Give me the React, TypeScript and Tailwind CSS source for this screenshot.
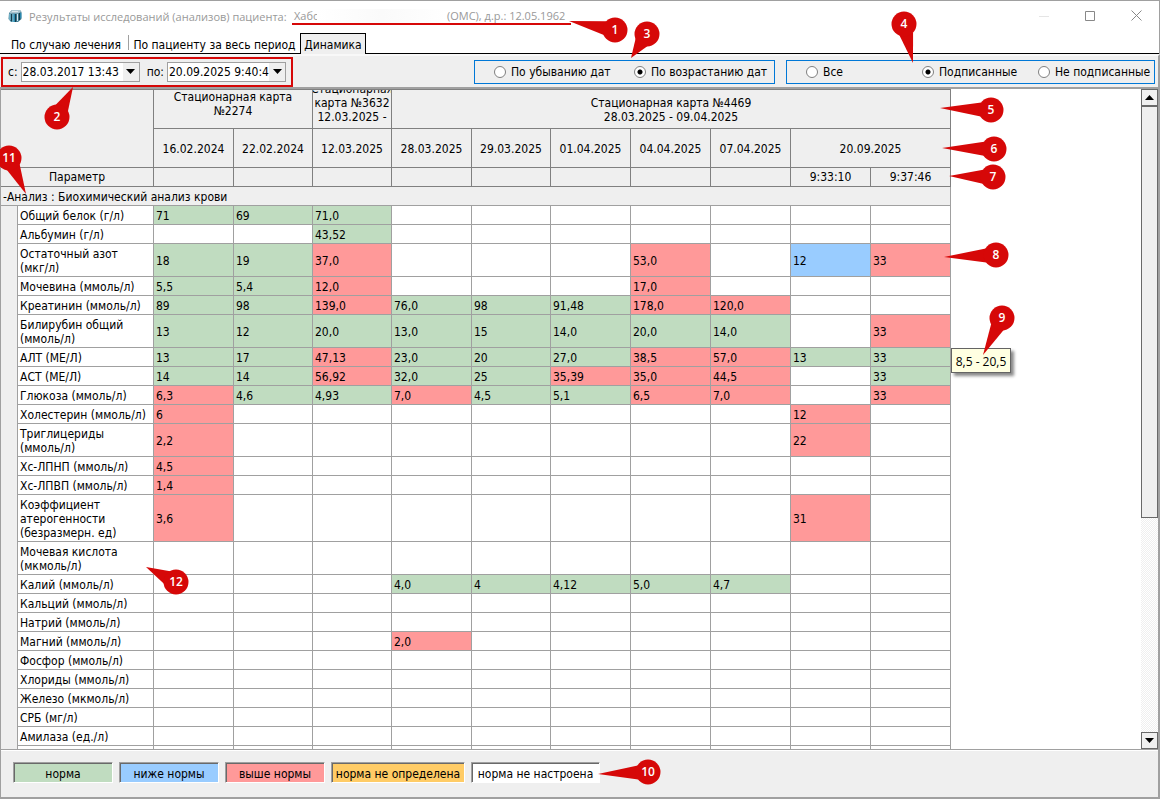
import React, { useState } from 'react';

type Level = 'n' | 'l' | 'h';
type Cell = [string, Level] | null;

const fill: Record<Level, string> = {
  n: 'bg-[#c0dcc0]',
  l: 'bg-[#99ccff]',
  h: 'bg-[#ff9999]',
};

// Each row lists its values as "column:value:level".
const source: [string[], string][] = [
  [['Общий белок (г/л)'], '0:71:n 1:69:n 2:71,0:n'],
  [['Альбумин (г/л)'], '2:43,52:n'],
  [['Остаточный азот', '(мкг/л)'], '0:18:n 1:19:n 2:37,0:h 6:53,0:h 8:12:l 9:33:h'],
  [['Мочевина (ммоль/л)'], '0:5,5:n 1:5,4:n 2:12,0:h 6:17,0:h'],
  [['Креатинин (ммоль/л)'], '0:89:n 1:98:n 2:139,0:h 3:76,0:n 4:98:n 5:91,48:n 6:178,0:h 7:120,0:h'],
  [['Билирубин общий', '(ммоль/л)'], '0:13:n 1:12:n 2:20,0:n 3:13,0:n 4:15:n 5:14,0:n 6:20,0:n 7:14,0:n 9:33:h'],
  [['АЛТ (МЕ/Л)'], '0:13:n 1:17:n 2:47,13:h 3:23,0:n 4:20:n 5:27,0:n 6:38,5:h 7:57,0:h 8:13:n 9:33:n'],
  [['АСТ (МЕ/Л)'], '0:14:n 1:14:n 2:56,92:h 3:32,0:n 4:25:n 5:35,39:h 6:35,0:h 7:44,5:h 9:33:n'],
  [['Глюкоза (ммоль/л)'], '0:6,3:h 1:4,6:n 2:4,93:n 3:7,0:h 4:4,5:n 5:5,1:n 6:6,5:h 7:7,0:h 9:33:h'],
  [['Холестерин (ммоль/л)'], '0:6:h 8:12:h'],
  [['Триглицериды', '(ммоль/л)'], '0:2,2:h 8:22:h'],
  [['Хс-ЛПНП (ммоль/л)'], '0:4,5:h'],
  [['Хс-ЛПВП (ммоль/л)'], '0:1,4:h'],
  [['Коэффициент', 'атерогенности', '(безразмерн. ед)'], '0:3,6:h 8:31:h'],
  [['Мочевая кислота', '(мкмоль/л)'], ''],
  [['Калий (ммоль/л)'], '3:4,0:n 4:4:n 5:4,12:n 6:5,0:n 7:4,7:n'],
  [['Кальций (ммоль/л)'], ''],
  [['Натрий (ммоль/л)'], ''],
  [['Магний (ммоль/л)'], '3:2,0:h'],
  [['Фосфор (ммоль/л)'], ''],
  [['Хлориды (ммоль/л)'], ''],
  [['Железо (мкмоль/л)'], ''],
  [['СРБ (мг/л)'], ''],
  [['Амилаза (ед./л)'], ''],
  [[], ''],
];

const rows = source.map(([name, values]) => {
  const cells: Cell[] = Array(10).fill(null);
  values.split(' ').filter(Boolean).forEach((item) => {
    const [col, value, level] = item.split(':');
    cells[Number(col)] = [value, level as Level];
  });
  return { name, cells };
});

const columns = ['w-20', 'w-[79px]', 'w-[79px]', 'w-20', 'w-[79px]', 'w-20', 'w-20', 'w-20', 'w-20', 'w-20'];
const dates = ['16.02.2024', '22.02.2024', '12.03.2025', '28.03.2025', '29.03.2025', '01.04.2025', '04.04.2025', '07.04.2025'];

const legend = [
  ['норма', 'w-[100px] bg-[#c0dcc0]'],
  ['ниже нормы', 'w-[100px] bg-[#99ccff]'],
  ['выше нормы', 'w-[100px] bg-[#ff9999]'],
  ['норма не определена', 'w-[134px] bg-[#ffcc66]'],
  ['норма не настроена', 'w-[129px] bg-white'],
];

// Callouts: label, centre of the disc, tip of the pointer.
const callouts = [
  [1, 615, 30, 569, 21],
  [2, 57, 117, 73, 87],
  [3, 647, 34, 631, 58],
  [4, 904, 24, 913, 63],
  [5, 991, 110, 940, 108],
  [6, 994, 149, 942, 148],
  [7, 993, 177, 949, 176],
  [8, 996, 255, 944, 257],
  [9, 1002, 318, 983, 355],
  [10, 648, 772, 598, 774],
  [11, 9, 158, 26, 194],
  [12, 176, 582, 146, 567],
];

function Callouts() {
  return (
    <svg className="pointer-events-none absolute left-0 top-0" width="1160" height="799" viewBox="0 0 1160 799">
      {callouts.map(([n, cx, cy, tx, ty]) => {
        const d = Math.hypot(tx - cx, ty - cy);
        const ux = (tx - cx) / d;
        const uy = (ty - cy) / d;
        const bx = cx + ux * 10;
        const by = cy + uy * 10;
        return (
          <g key={n} fill="#d60808">
            <polygon points={`${tx},${ty} ${bx - uy * 7},${by + ux * 7} ${bx + uy * 7},${by - ux * 7}`} />
            <circle cx={cx} cy={cy} r="12.5" />
            <text x={cx} y={cy + 4} fill="#fff" textAnchor="middle" className="font-['Open_Sans',sans-serif] text-[12px] font-semibold">
              {n}
            </text>
          </g>
        );
      })}
    </svg>
  );
}

function AppIcon() {
  return (
    <svg width="14" height="14" viewBox="0 0 14 14" aria-hidden="true">
      <path d="M1 4 4 1h8l1.500 2v7L10 13H3L.5 10z" fill="#3f7f96" />
      <path d="M1 4 4 1h8l1 2-3 1.500H2z" fill="#a9c4cf" />
      <path d="M2 5v6M5 5v8" stroke="#8fd0e6" strokeWidth="1.200" />
      <path d="M3.500 5v7M7.500 5v8M11.500 4v7" stroke="#173a4a" strokeWidth="1.200" />
      <path d="M9.500 5v7M4 2.500h6" stroke="#dbe7ec" />
      <path d="M6.200 5v8M12.800 4v5" stroke="#2591bd" />
    </svg>
  );
}

function DateBox({ id, label, value }: { id: string; label: string; value: string }) {
  return (
    <div className="flex items-center gap-[3px]">
      <label htmlFor={id}>{label}</label>
      <div className="flex h-5 w-[119px] border border-[#a0a0a0] bg-white">
        <input id={id} defaultValue={value} className="min-w-0 flex-1 bg-transparent pl-px outline-none" />
        <button aria-label="Открыть календарь" className="flex w-4 items-center justify-center bg-[#efefef]">
          <svg width="9" height="5" viewBox="0 0 9 5"><path d="M0 0h9L4.500 5z" /></svg>
        </button>
      </div>
    </div>
  );
}

function RadioBox({ name, options, initial, width, cols }: { name: string; options: string[]; initial: number; width: string; cols: string }) {
  const [value, setValue] = useState(initial);
  return (
    <div role="radiogroup" className={`grid h-6 items-center border border-[#0078d7] pl-[19px] ${width} ${cols}`}>
      {options.map((o, i) => (
        <label key={o} className="flex items-center gap-[5px] whitespace-nowrap">
          <input
            type="radio"
            name={name}
            checked={value === i}
            onChange={() => setValue(i)}
            className="size-3 shrink-0 appearance-none rounded-full border border-[#808080] bg-white checked:bg-[radial-gradient(circle,#000_0_2px,#fff_3px)]"
          />
          {o}
        </label>
      ))}
    </div>
  );
}

const head = 'border-r border-b border-[#808080] px-0 pb-0 font-normal';

function Grid() {
  return (
    <table className="w-[950px] shrink-0 table-fixed border-separate border-spacing-0 self-start">
      <colgroup>
        <col className="w-[17px]" />
        <col className="w-[136px]" />
        {columns.map((c, i) => <col key={i} className={c} />)}
      </colgroup>
      <thead className="bg-[#efefef]">
        <tr className="h-10">
          <th colSpan={2} rowSpan={2} className={`${head} border-t pt-0`} />
          <th colSpan={2} className={`${head} border-t pt-0`}>
            <div className="flex h-[38px] flex-col overflow-hidden"><span>Стационарная карта</span><span>№2274</span></div>
          </th>
          <th className={`${head} border-t pt-0`}>
            <div className="flex h-[38px] flex-col items-center justify-end overflow-hidden whitespace-nowrap pb-1">
              <span>Стационарная</span><span>карта №3632</span><span>12.03.2025 -</span>
            </div>
          </th>
          <th colSpan={7} className={`${head} border-t pt-0.5`}>
            <div>Стационарная карта №4469</div>
            <div>28.03.2025 - 09.04.2025</div>
          </th>
        </tr>
        <tr className="h-[39px]">
          {dates.map((d) => <th key={d} className={`${head} pt-0.5`}>{d}</th>)}
          <th colSpan={2} className={`${head} pt-0.5`}>20.09.2025</th>
        </tr>
        <tr className="h-[19px]">
          <th colSpan={2} className={`${head} pt-0`}>Параметр</th>
          {dates.map((d) => <th key={d} className={`${head} pt-0`} />)}
          <th className={`${head} pt-0`}>9:33:10</th>
          <th className={`${head} pt-0`}>9:37:46</th>
        </tr>
      </thead>
      <tbody>
        <tr className="h-[19px] bg-[#efefef]">
          <th colSpan={12} className="border-r border-b border-[#a0a0a0] px-0.5 pt-0.5 pb-0 text-left font-normal">
            -Анализ : Биохимический анализ крови
          </th>
        </tr>
        {rows.map((row, r) => (
          <tr key={r} className="h-[19px]">
            {r === 0 && <td rowSpan={rows.length} className="border-r border-[#a0a0a0] bg-[#efefef] p-0" />}
            <th className="whitespace-nowrap border-r border-b border-[#a0a0a0] px-0.5 pt-[3px] pb-px text-left font-normal">
              {row.name.map((line) => <div key={line}>{line}</div>)}
            </th>
            {row.cells.map((cell, c) => (
              <td key={c} className={`border-r border-b border-[#a0a0a0] px-0.5 pt-0.5 pb-0 ${cell ? fill[cell[1]] : 'bg-white'}`}>
                {cell?.[0]}
              </td>
            ))}
          </tr>
        ))}
      </tbody>
    </table>
  );
}

function ScrollBar() {
  const button = 'flex h-[17px] shrink-0 items-center justify-center border border-[#696969] bg-[#f0f0f0]';
  return (
    <div className="ml-auto flex w-[17px] flex-col bg-[repeating-conic-gradient(#efefef_0_25%,#fff_0_50%)] bg-[length:2px_2px]">
      <button aria-label="Прокрутить вверх" className={button}>
        <svg width="9" height="5" viewBox="0 0 9 5"><path d="M0 5h9L4.500 0z" /></svg>
      </button>
      <div className="h-[412px] border border-[#696969] bg-[#efefef]" />
      <button aria-label="Прокрутить вниз" className={`${button} mt-auto`}>
        <svg width="9" height="5" viewBox="0 0 9 5"><path d="M0 0h9L4.500 5z" /></svg>
      </button>
    </div>
  );
}

export default function App() {
  return (
    <div className="relative flex h-screen flex-col overflow-hidden border-t border-[#a0a0a0] bg-white font-['DejaVu_Sans_Condensed','DejaVu_Sans',sans-serif] text-[12px] leading-[14px] text-black">
      <header className="flex h-[29px] shrink-0 items-center border-r border-[#a0a0a0] pl-2 font-['Open_Sans',sans-serif] text-[#999]">
        <AppIcon />
        <h1 className="ml-[7px] flex items-center whitespace-nowrap text-[11px]">
          <span className="w-[263px] pt-0.5">Результаты исследований (анализов) пациента:</span>
          <span className="flex border-b-2 border-[#d60808] pt-0.5 pl-0.5">
            <span className="w-[23px]">Хабо</span>
            <span className="w-[130px] bg-linear-to-r from-white via-[#fafafa] to-white" />
            <span className="w-[124px]">(ОМС), д.р.: 12.05.1962</span>
          </span>
        </h1>
        <div className="ml-auto flex items-center gap-9 pr-[17px]">
          <button aria-label="Свернуть"><svg width="10" height="10"><path d="M0 5.500h10" stroke="#e5e5e5" /></svg></button>
          <button aria-label="Развернуть"><svg width="10" height="10"><path d="M.5.5h9v9h-9z" fill="none" stroke="#888" /></svg></button>
          <button aria-label="Закрыть"><svg width="11" height="11"><path d="m.5.5 10 10m0-10-10 10" stroke="#888" /></svg></button>
        </div>
      </header>

      <div role="tablist" className="flex h-6 shrink-0 items-end border-r border-[#a0a0a0] shadow-[inset_0_-1px_#000]">
        <button role="tab" className="h-5 w-32 pt-0.5 pl-1 whitespace-nowrap">По случаю лечения</button>
        <div className="mb-1 h-[15px] w-px bg-[#a0a0a0]" />
        <button role="tab" className="h-5 w-[171px] pt-0.5 whitespace-nowrap">По пациенту за весь период</button>
        <button role="tab" aria-selected="true" className="h-[21px] w-[66px] border border-b-0 border-black bg-[#efefef] pt-0.5">Динамика</button>
      </div>

      <div className="flex h-[33px] shrink-0 items-center border-t-2 border-r-2 border-[#f8f8f8] border-r-[#a0a0a0] bg-[#efefef] pr-[3px]">
        <div className="ml-px flex h-[30px] w-[292px] items-center justify-between border-2 border-[#d60808] pl-[5px] pr-[5px]">
          <DateBox id="from" label="с:" value="28.03.2017 13:43" />
          <DateBox id="to" label="по:" value="20.09.2025 9:40:45" />
        </div>
        <div className="ml-auto flex gap-[11px]">
          <RadioBox name="order" options={['По убыванию дат', 'По возрастанию дат']} initial={1} width="w-[301px]" cols="grid-cols-2" />
          <RadioBox name="signed" options={['Все', 'Подписанные', 'Не подписанные']} initial={1} width="w-[369px]" cols="grid-cols-3" />
        </div>
      </div>

      <main className="flex min-h-0 flex-1 overflow-hidden border-t-2 border-r-2 border-l border-[#a0a0a0]">
        <Grid />
        <ScrollBar />
      </main>

      <footer className="flex h-[50px] shrink-0 gap-1.5 border-t border-r-2 border-b-2 border-l border-[#a0a0a0] bg-[#efefef] pt-3 pl-3 shadow-[inset_0_1px_#fff]">
        {legend.map(([label, style]) => (
          <div
            key={label}
            className={`flex h-[21px] items-center justify-center whitespace-nowrap border border-t-[#a0a0a0] border-l-[#a0a0a0] border-r-white border-b-white pt-0.5 shadow-[inset_1px_1px_#696969] ${style}`}
          >
            {label}
          </div>
        ))}
      </footer>

      <div role="tooltip" className="absolute left-[951px] top-[347px] flex h-[25px] w-[60px] items-center justify-center whitespace-nowrap border border-[#646464] bg-[#ffffe1] pt-0.5 font-['Open_Sans',sans-serif] shadow-[3px_3px_3px_#0007]">
        8,5 - 20,5
      </div>
      <div className="absolute left-0 -top-px">
        <Callouts />
      </div>
    </div>
  );
}
